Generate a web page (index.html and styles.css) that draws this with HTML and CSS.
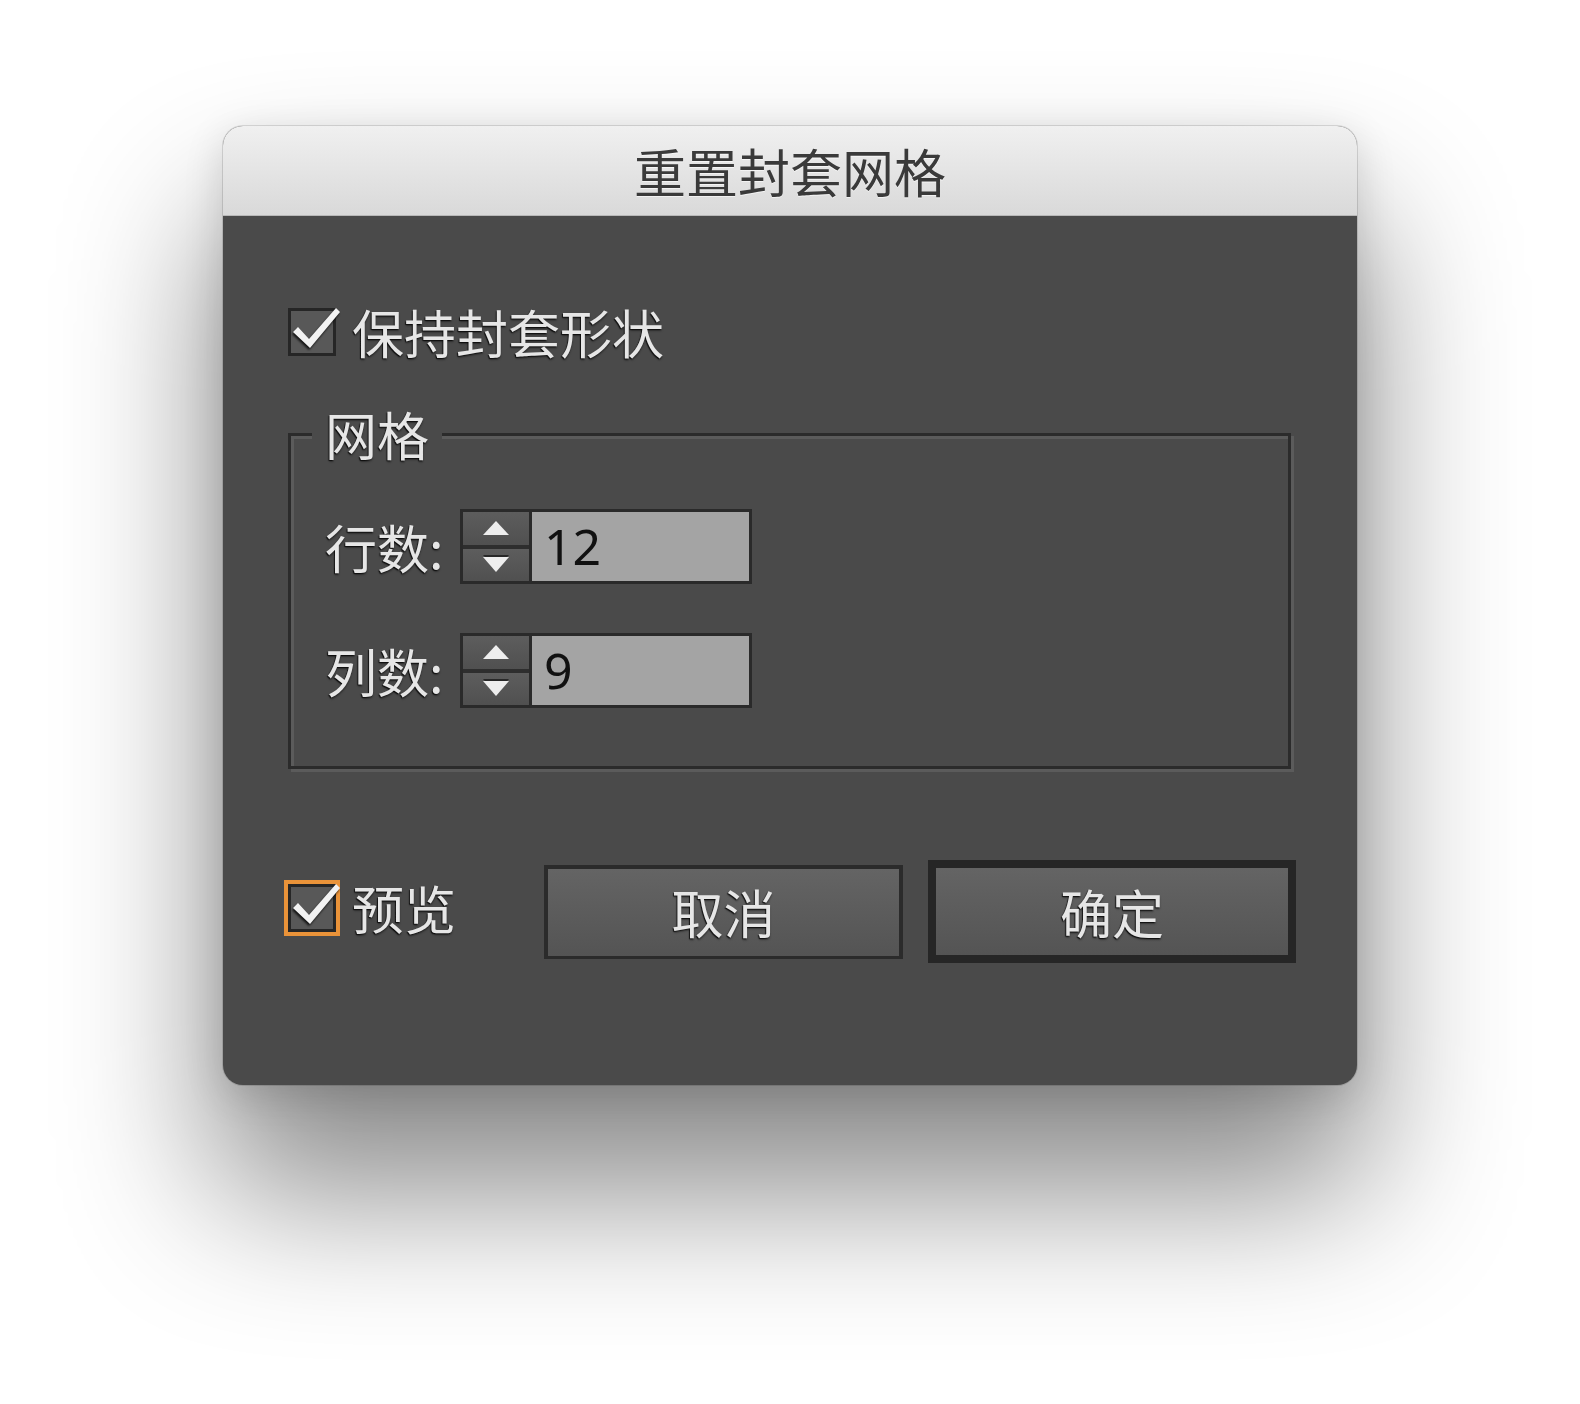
FILE: index.html
```html
<!DOCTYPE html>
<html lang="zh-CN">
<head>
<meta charset="utf-8">
<title>重置封套网格</title>
<link rel="stylesheet" href="styles.css">
</head>
<body>
<div class="dialog">
  <div class="titlebar">重置封套网格</div>
  <div class="content">
    <label class="check-row">
      <span class="checkbox">
        <svg class="tick" viewBox="0 0 42 42" width="42" height="42"><polygon points="2,21 7,16 18,28 45,-3 49,1 19,37"/></svg>
      </span>
      <span class="check-text">保持封套形状</span>
    </label>

    <fieldset class="group">
      <legend>网格</legend>
      <div class="field-row">
        <span class="field-label">行数:</span>
        <div class="spinner">
          <div class="stepper">
            <span class="step up"><svg viewBox="0 0 26 14" width="26" height="14"><polygon points="0,14 13,0 26,14"/></svg></span>
            <span class="step down"><svg viewBox="0 0 26 15" width="26" height="15"><polygon points="0,0 26,0 13,15"/></svg></span>
          </div>
          <div class="value">12</div>
        </div>
      </div>
      <div class="field-row">
        <span class="field-label">列数:</span>
        <div class="spinner">
          <div class="stepper">
            <span class="step up"><svg viewBox="0 0 26 14" width="26" height="14"><polygon points="0,14 13,0 26,14"/></svg></span>
            <span class="step down"><svg viewBox="0 0 26 15" width="26" height="15"><polygon points="0,0 26,0 13,15"/></svg></span>
          </div>
          <div class="value">9</div>
        </div>
      </div>
    </fieldset>

    <div class="actions">
      <label class="check-row preview">
        <span class="checkbox focused">
          <svg class="tick" viewBox="0 0 42 42" width="42" height="42"><polygon points="2,21 7,16 18,28 45,-3 49,1 19,37"/></svg>
        </span>
        <span class="check-text">预览</span>
      </label>
      <div class="btn cancel">取消</div>
      <div class="btn default">确定</div>
    </div>
  </div>
</div>
</body>
</html>
```
FILE: styles.css
```css
html, body {
  margin: 0;
}
body {
  background: #ffffff;
  padding: 126px 0 0 223px;
  height: 1404px;
  box-sizing: border-box;
  overflow: hidden;
  font-family: "Noto Sans CJK SC", "Noto Sans", sans-serif;
}

.dialog {
  width: 1134px;
  height: 959px;
  border-radius: 20px;
  overflow: hidden;
  background: #4a4a4a;
  box-shadow:
    0 0 0 1px rgba(0, 0, 0, 0.12),
    0 100px 150px 10px rgba(0, 0, 0, 0.45),
    0 10px 40px rgba(0, 0, 0, 0.14);
}

.titlebar {
  height: 90px;
  line-height: 90px;
  text-align: center;
  font-size: 52px;
  color: #3a3a3a;
  background: linear-gradient(#f0f0f0, #d9d9d9);
  border-bottom: 1px solid #b9b9b9;
  box-sizing: border-box;
  text-shadow: 0 1px 0 rgba(255, 255, 255, 0.6);
}

.content {
  padding: 92px 66px 0 65px;
  color: #e6e6e6;
  font-size: 52px;
  line-height: 1;
}

.check-row {
  display: flex;
  align-items: center;
  gap: 16px;
  height: 48px;
}

.checkbox {
  width: 48px;
  height: 48px;
  box-sizing: border-box;
  border: 3px solid #262626;
  background: #585858;
  flex-shrink: 0;
}
.checkbox.focused {
  box-shadow: 0 0 0 4px #ea9339;
}
.tick {
  display: block;
  overflow: visible;
  fill: #f2f2f2;
  filter: drop-shadow(-1px 2px 1px rgba(0, 0, 0, 0.8));
}

.check-text,
.field-label,
.group legend,
.btn {
  text-shadow: -1px 1px 1px rgba(0, 0, 0, 0.75), 0 2px 2px rgba(0, 0, 0, 0.35);
}

.group {
  margin: 52px 0 0 0;
  padding: 49px 0 58px 34px;
  border: 3px solid #2b2b2b;
  box-shadow: 3px 3px 0 #5b5b5b, inset 3px 3px 0 #5b5b5b;
  min-inline-size: 0;
}
.group legend {
  margin-left: -13px;
  padding: 0 13px;
  line-height: 52px;
  background: #4a4a4a;
}

.field-row {
  display: flex;
  align-items: center;
  height: 75px;
}
.field-row + .field-row {
  margin-top: 49px;
}
.field-label {
  width: 135px;
  flex-shrink: 0;
}

.spinner {
  display: flex;
  width: 292px;
  height: 75px;
  box-sizing: border-box;
  border: 3px solid #2a2a2a;
}
.stepper {
  width: 66px;
  display: flex;
  flex-direction: column;
  border-right: 3px solid #2a2a2a;
}
.step {
  flex: 1;
  display: flex;
  align-items: center;
  justify-content: center;
  background: linear-gradient(#5d5d5d, #505050);
}
.step svg {
  display: block;
  fill: #eeeeee;
}
.step.down {
  border-top: 4px solid #2e2e2e;
}
.step.down svg {
  filter: drop-shadow(0 -2px 0 rgba(0, 0, 0, 0.55));
}
.value {
  flex: 1;
  background: #a4a4a4;
  color: #111111;
  font-family: "Noto Sans", "Liberation Sans", sans-serif;
  font-size: 50px;
  line-height: 69px;
  padding-left: 12px;
}

.actions {
  display: flex;
  align-items: center;
  margin-top: 91px;
}
.preview {
  width: 256px;
  flex-shrink: 0;
  margin-bottom: 8px;
}

.btn {
  box-sizing: border-box;
  display: flex;
  align-items: center;
  justify-content: center;
  flex-shrink: 0;
  color: #e6e6e6;
  background: linear-gradient(#646464, #545454);
}
.btn.cancel {
  width: 359px;
  height: 94px;
  border: 4px solid #2b2b2b;
  border-bottom-width: 3px;
  margin-right: 25px;
}
.btn.default {
  width: 368px;
  height: 103px;
  border: 8px solid #262626;
}
```
